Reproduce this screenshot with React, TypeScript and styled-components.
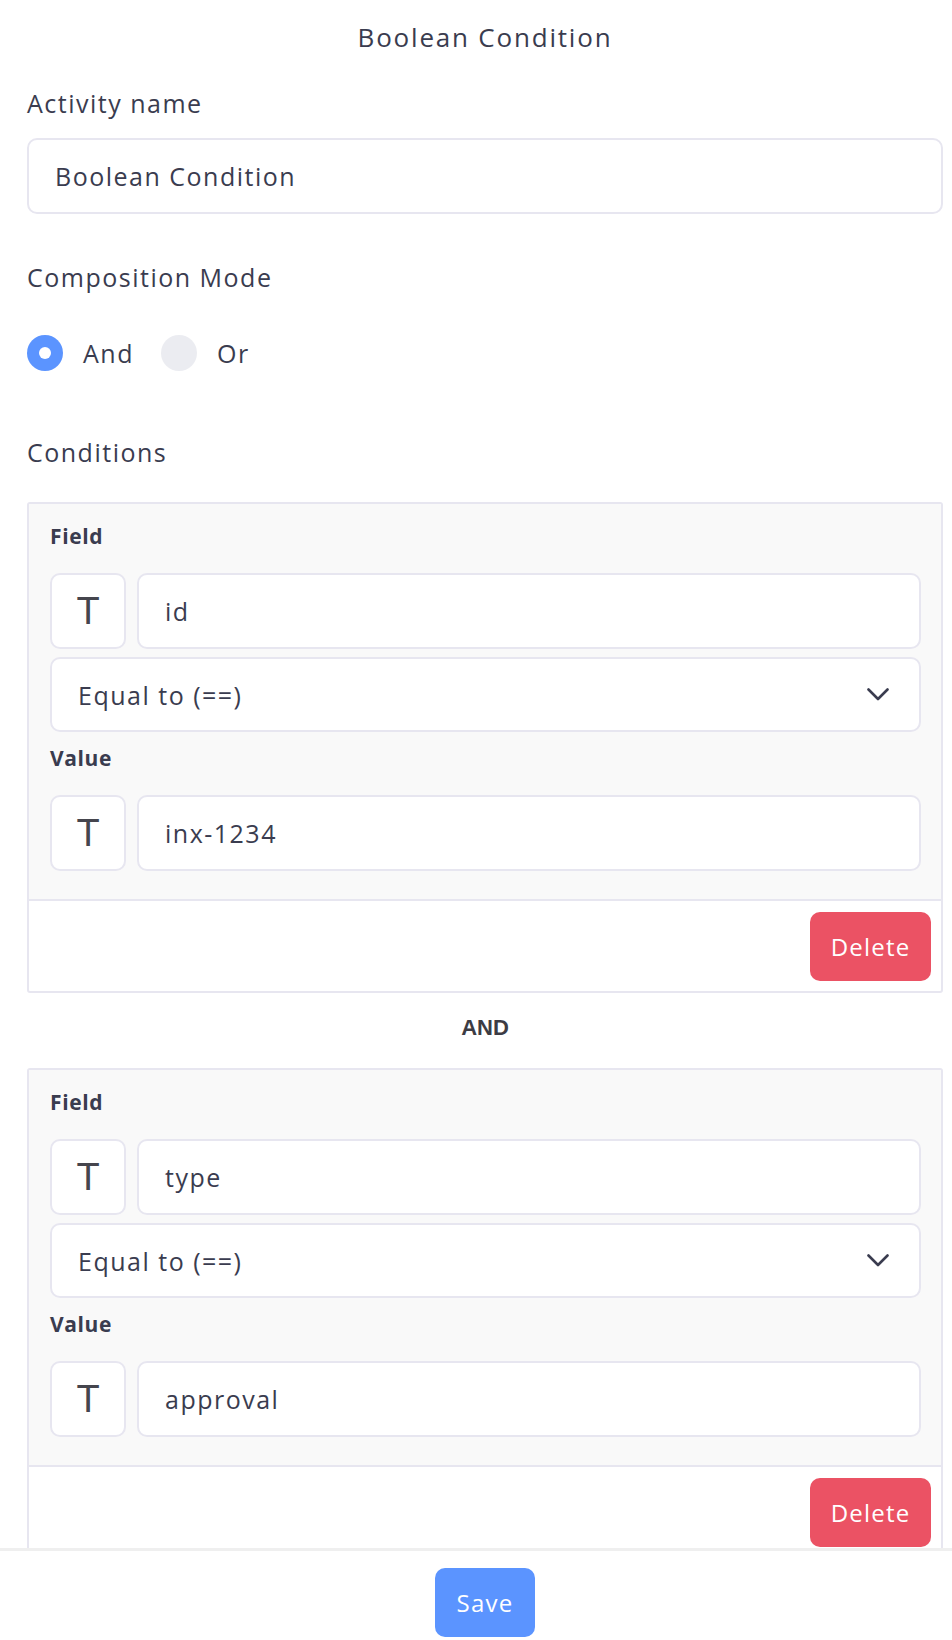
import React from 'react';
import styled, { createGlobalStyle } from 'styled-components';

const GlobalStyle = createGlobalStyle`
  html, body {
    margin: 0;
    padding: 0;
    background: #ffffff;
  }
  body {
    font-family: 'Open Sans', 'Noto Sans', sans-serif;
    color: #3a3c4f;
  }
  * {
    box-sizing: border-box;
  }
`;

const Page = styled.div`
  height: 100vh;
  display: flex;
  flex-direction: column;
  overflow: hidden;
`;

const Scroll = styled.div`
  flex: 1;
  min-height: 0;
  overflow: hidden;
  padding: 0 9px 0 27px;
`;

const Title = styled.h1`
  margin: 20px 0 0;
  font-size: 26px;
  font-weight: 400;
  line-height: 34px;
  letter-spacing: 1.8px;
  text-align: center;
`;

const SectionLabel = styled.div<{ $top: number; $bottom: number }>`
  margin: ${p => p.$top}px 0 ${p => p.$bottom}px;
  font-size: 25px;
  line-height: 32px;
  letter-spacing: 1.5px;
`;

const TextInput = styled.div`
  height: 76px;
  display: flex;
  align-items: center;
  padding: 0 26px;
  background: #ffffff;
  border: 2px solid #e7e6f0;
  border-radius: 10px;
  font-size: 25px;
  letter-spacing: 1.5px;
  color: #3a3c4f;
  flex: 1;
  min-width: 0;
`;

const RadioGroup = styled.div`
  margin-top: 42px;
  height: 36px;
  display: flex;
  align-items: center;
`;

const RadioOption = styled.label`
  display: flex;
  align-items: center;
  gap: 20px;
  margin-right: 27px;
  font-size: 25px;
  letter-spacing: 1.5px;
`;

const RadioDot = styled.span<{ $checked?: boolean }>`
  width: 36px;
  height: 36px;
  border-radius: 50%;
  background: ${p => (p.$checked ? '#5b94ff' : '#ebecf1')};
  display: flex;
  align-items: center;
  justify-content: center;

  &::after {
    content: '';
    width: 12px;
    height: 12px;
    border-radius: 50%;
    background: #ffffff;
    display: ${p => (p.$checked ? 'block' : 'none')};
  }
`;

const Card = styled.div`
  border: 2px solid #e7e6f0;
  border-radius: 3px;
  background: #ffffff;
`;

const CardBody = styled.div`
  background: #f9f9f9;
  padding: 17px 20px 28px 21px;
  border-bottom: 2px solid #e7e6f0;
`;

const FieldLabel = styled.div<{ $top?: number }>`
  margin: ${p => p.$top || 0}px 0 22px;
  font-size: 21px;
  font-weight: 700;
  line-height: 30px;
  letter-spacing: 0.6px;
  color: #3a3c4f;
`;

const InputRow = styled.div`
  display: flex;
  gap: 11px;
`;

const TypeButton = styled.div`
  width: 76px;
  height: 76px;
  flex-shrink: 0;
  display: flex;
  align-items: center;
  justify-content: center;
  background: #ffffff;
  border: 2px solid #e7e6f0;
  border-radius: 10px;
  font-family: 'Liberation Sans', Arial, sans-serif;
  font-size: 38px;
  letter-spacing: 0;
  color: #45454d;
`;

const Select = styled(TextInput)`
  margin-top: 8px;
  height: 75px;
  justify-content: space-between;
  padding-right: 30px;
`;

const CardFooter = styled.div`
  display: flex;
  justify-content: flex-end;
  padding: 11px 10px 10px;
`;

const Button = styled.button<{ $color: string; $width: number }>`
  width: ${p => p.$width}px;
  height: 69px;
  border: none;
  border-radius: 10px;
  background: ${p => p.$color};
  color: #ffffff;
  font-family: 'Open Sans', 'Noto Sans', sans-serif;
  font-size: 24px;
  letter-spacing: 1.2px;
  cursor: pointer;
`;

const Joiner = styled.div`
  margin: 21px 0 26px;
  line-height: 28px;
  text-align: center;
  font-family: 'Liberation Sans', Arial, sans-serif;
  font-size: 22px;
  font-weight: 700;
  color: #3c3c44;
`;

const Footer = styled.div`
  flex-shrink: 0;
  border-top: 3px solid #efefef;
  padding: 17px 0 3px 18px;
  display: flex;
  justify-content: center;
  background: #ffffff;
`;

const Chevron = () => (
  <svg width="22" height="13" viewBox="0 0 22 13" fill="none">
    <polyline points="1.5,1.5 11,11 20.5,1.5" stroke="#3a3c4f" strokeWidth="2.6" strokeLinecap="round" strokeLinejoin="round" />
  </svg>
);

interface Condition {
  field: string;
  operator: string;
  value: string;
}

const conditions: Condition[] = [
  { field: 'id', operator: 'Equal to (==)', value: 'inx-1234' },
  { field: 'type', operator: 'Equal to (==)', value: 'approval' },
];

const ConditionCard: React.FC<{ condition: Condition }> = ({ condition }) => (
  <Card>
    <CardBody>
      <FieldLabel>Field</FieldLabel>
      <InputRow>
        <TypeButton>T</TypeButton>
        <TextInput>{condition.field}</TextInput>
      </InputRow>
      <Select>
        <span>{condition.operator}</span>
        <Chevron />
      </Select>
      <FieldLabel $top={11}>Value</FieldLabel>
      <InputRow>
        <TypeButton>T</TypeButton>
        <TextInput>{condition.value}</TextInput>
      </InputRow>
    </CardBody>
    <CardFooter>
      <Button $color="#eb5264" $width={121}>Delete</Button>
    </CardFooter>
  </Card>
);

const App: React.FC = () => {
  return (
    <Page>
      <GlobalStyle />
      <Scroll>
        <Title>Boolean Condition</Title>
        <SectionLabel $top={33} $bottom={19}>Activity name</SectionLabel>
        <TextInput>Boolean Condition</TextInput>
        <SectionLabel $top={47} $bottom={0}>Composition Mode</SectionLabel>
        <RadioGroup>
          <RadioOption>
            <RadioDot $checked />
            And
          </RadioOption>
          <RadioOption>
            <RadioDot />
            Or
          </RadioOption>
        </RadioGroup>
        <SectionLabel $top={65} $bottom={34}>Conditions</SectionLabel>
        {conditions.map((c, i) => (
          <React.Fragment key={i}>
            {i > 0 && <Joiner>AND</Joiner>}
            <ConditionCard condition={c} />
          </React.Fragment>
        ))}
      </Scroll>
      <Footer>
        <Button $color="#5b94ff" $width={100}>Save</Button>
      </Footer>
    </Page>
  );
};

export default App;
